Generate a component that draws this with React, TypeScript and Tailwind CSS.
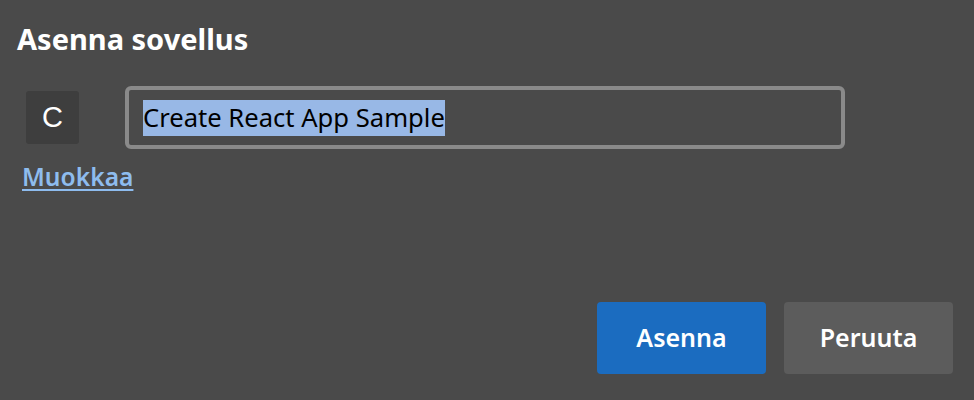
export default function App() {
  return (
    <div
      className="w-[974px] h-[400px] bg-[#4a4a4a] text-white flex flex-col overflow-hidden"
      style={{ fontFamily: '"Noto Sans", "Open Sans", sans-serif' }}
    >
      {/* Title */}
      <h1 className="ml-[17px] mt-[20px] text-[29px] leading-[38px] font-bold">Asenna sovellus</h1>

      {/* App row */}
      <div className="mt-[28px] flex items-center">
        <div className="ml-[26px] w-[53px] h-[53px] rounded-[3px] bg-[#3e3e3e] flex items-center justify-center">
          <span className="text-[29px] leading-none" style={{ fontFamily: '"Liberation Sans", Arial, sans-serif' }}>
            C
          </span>
        </div>
        <div className="ml-[46px] w-[720px] h-[63px] border-4 border-[#8a8a8a] rounded-[6px] flex items-center pl-[14px]">
          <span className="bg-[#98b8e6] text-black text-[25.6px] leading-[36px] whitespace-nowrap">
            Create React App Sample
          </span>
        </div>
      </div>

      {/* Edit link */}
      <a
        href="#"
        className="ml-[22px] mt-[11px] self-start text-[24.6px] leading-[34px] font-semibold text-[#8ebcee] underline underline-offset-[3px] decoration-2"
      >
        Muokkaa
      </a>

      {/* Actions */}
      <div className="mt-auto mb-[26px] mr-[21px] flex justify-end gap-[18px]">
        <button className="w-[169px] h-[72px] rounded-[4px] bg-[#1b6cc0] text-[25px] font-semibold text-white">
          Asenna
        </button>
        <button className="w-[169px] h-[72px] rounded-[4px] bg-[#5c5c5c] text-[25px] font-semibold text-white">
          Peruuta
        </button>
      </div>
    </div>
  )
}
